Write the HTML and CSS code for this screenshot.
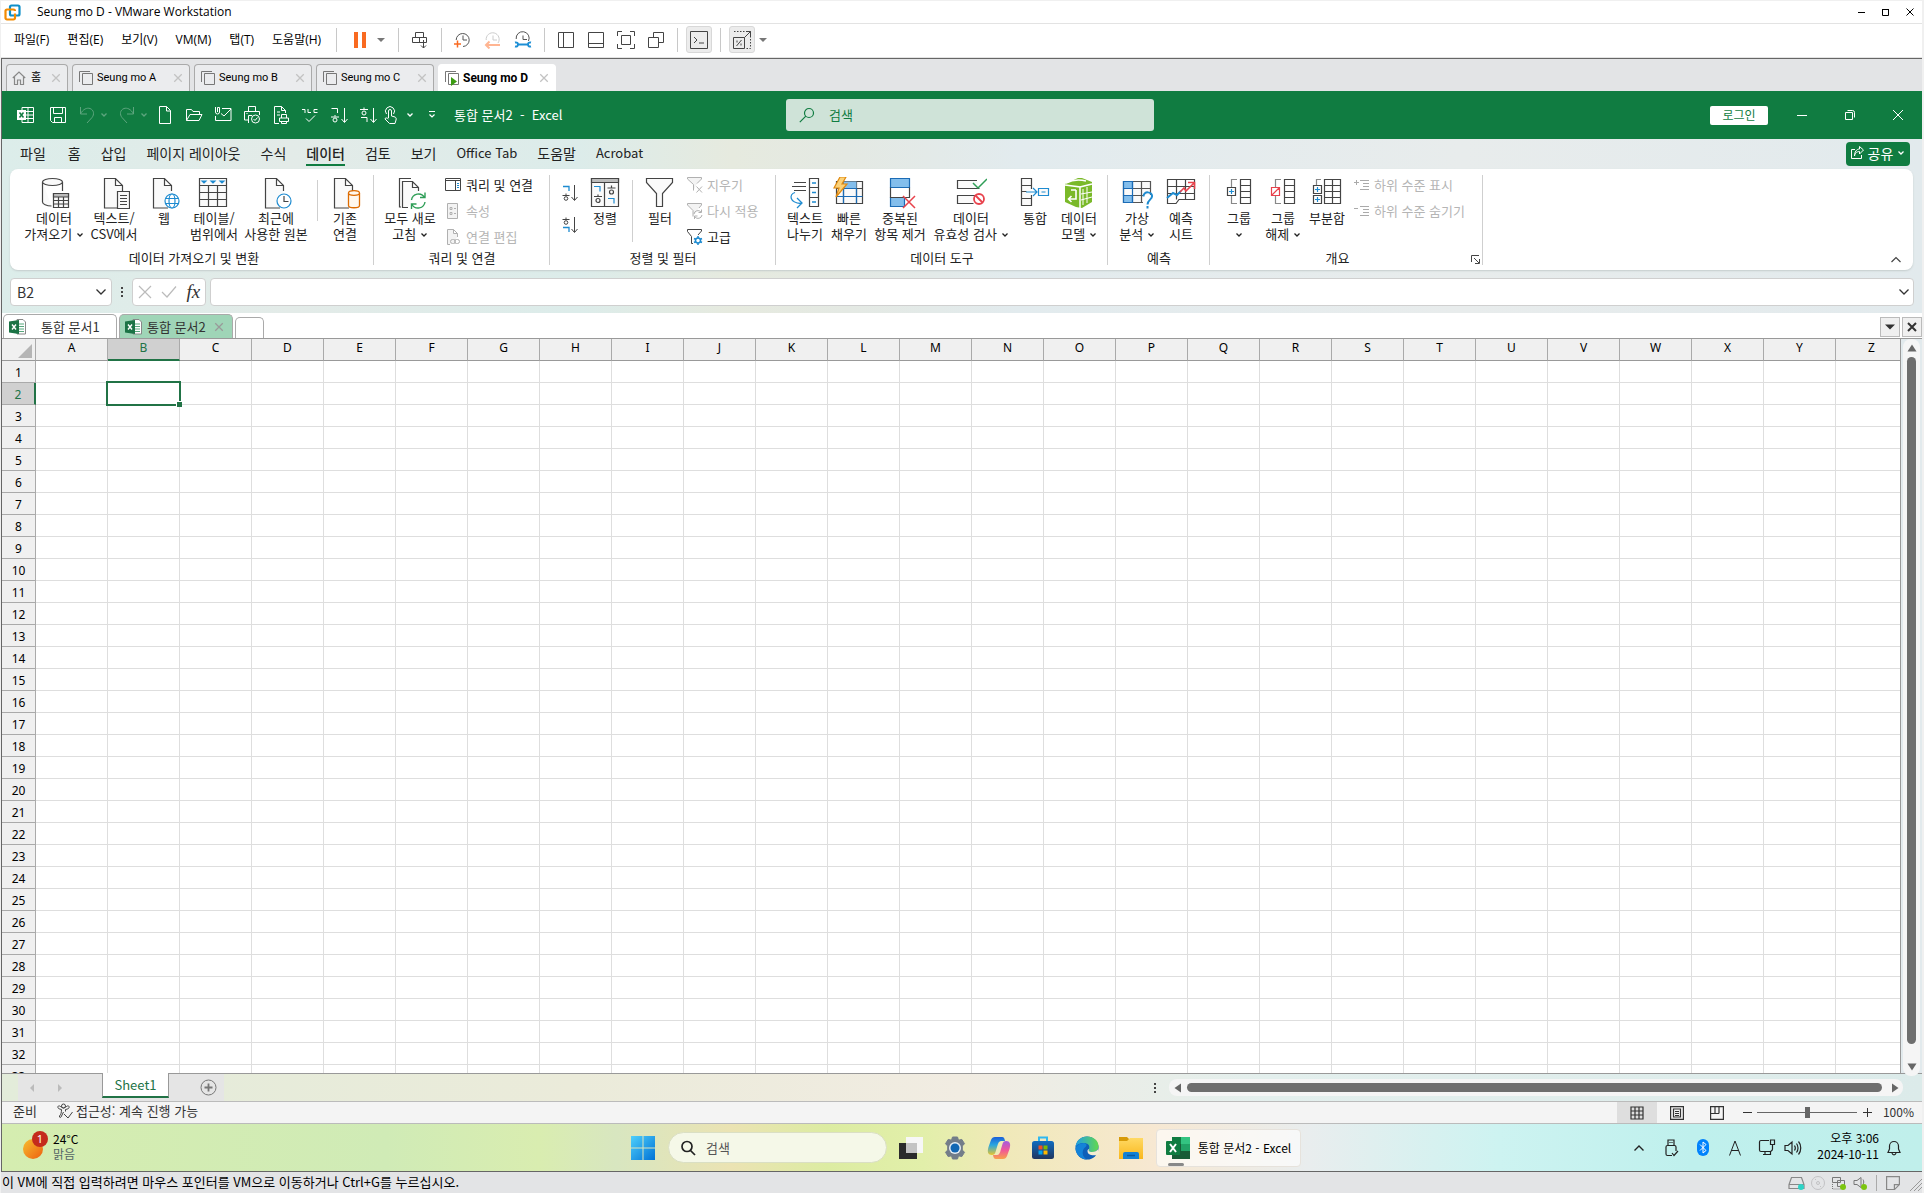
FILE: index.html
```html
<!DOCTYPE html>
<html lang="ko">
<head>
<meta charset="utf-8">
<title>Seung mo D - VMware Workstation</title>
<link rel="stylesheet" href="styles.css">
</head>
<body>
<svg width="0" height="0" class="defs" aria-hidden="true">
  <defs>
    <linearGradient id="gWin" x1="0" y1="0" x2="1" y2="1"><stop offset="0" stop-color="#4fd0fb"/><stop offset="1" stop-color="#0072d6"/></linearGradient>
    <linearGradient id="gSun" x1="0" y1="0" x2="1" y2="1"><stop offset="0" stop-color="#f6bf30"/><stop offset="1" stop-color="#ee5f10"/></linearGradient>
    <linearGradient id="gCop1" x1="0" y1="0" x2="0" y2="1"><stop offset="0" stop-color="#1b5fd9"/><stop offset=".45" stop-color="#2aa7e0"/><stop offset="1" stop-color="#e9c62d"/></linearGradient>
    <linearGradient id="gCop2" x1="0" y1="0" x2="0" y2="1"><stop offset="0" stop-color="#a25be0"/><stop offset=".5" stop-color="#f0569a"/><stop offset="1" stop-color="#f9a24a"/></linearGradient>
    <linearGradient id="gEdge" x1="0" y1="0" x2="1" y2="0"><stop offset="0" stop-color="#1f9fe6"/><stop offset="1" stop-color="#62d84e"/></linearGradient>
    <linearGradient id="gStore" x1="0" y1="0" x2="0" y2="1"><stop offset="0" stop-color="#0f6cc0"/><stop offset="1" stop-color="#20365f"/></linearGradient>
    <linearGradient id="gFold" x1="0" y1="0" x2="0" y2="1"><stop offset="0" stop-color="#ffd964"/><stop offset="1" stop-color="#f9b71c"/></linearGradient>
    <symbol id="chev" viewBox="0 0 8 8"><path d="M1.500 2.500 4 5l2.500-2.500" fill="none" stroke="currentColor" stroke-width="1.300"/></symbol>
    <symbol id="bigchev" viewBox="0 0 12 12"><path d="M1.500 3.500 6 8l4.500-4.500" fill="none" stroke="currentColor" stroke-width="1.300"/></symbol>
    <symbol id="tri" viewBox="0 0 8 8"><path d="M0 2h8L4 6z" fill="currentColor"/></symbol>
    <symbol id="vmtab" viewBox="0 0 16 16"><path d="M4.500 3.500h10v11h-10zM12 1.500H1.500V12" fill="none" stroke="#777"/></symbol>
    <symbol id="x" viewBox="0 0 12 12"><path d="M1.500 1.500l9 9M10.500 1.500l-9 9" fill="none" stroke="currentColor" stroke-width="1.500"/></symbol>
    <symbol id="page" viewBox="0 0 32 32"><path d="M20 31H5.500V1.500h11l7 7V14M16.500 1.500v7h7" fill="#fafafa" stroke="#444" stroke-width="1.200"/></symbol>
    <symbol id="xlsheet" viewBox="0 0 18 18"><path d="M8 1.500h6l2.500 2.500v12H8z" fill="#fff" stroke="#888"/><path d="M10 6h5M10 8.500h5M10 11h5M10 13.500h5" stroke="#57a77c"/><path d="M0 3.500 10 2v14L0 14.500z" fill="#1b7345"/><path d="M3 6.500l4 5M7 6.500l-4 5" stroke="#fff" stroke-width="1.400"/></symbol>
  </defs>
</svg>

<div class="vm">
  <header class="vm-title">
    <svg width="17" height="17" viewBox="0 0 17 17" fill="none" stroke-width="2.200"><rect x="6" y="1.500" width="9.500" height="10" rx="1.500" stroke="#0e8fc9"/><path d="M11 9.500V14a1.500 1.500 0 0 1-1.500 1.500H3A1.500 1.500 0 0 1 1.500 14V7A1.500 1.500 0 0 1 3 5.500h6.500A1.500 1.500 0 0 1 11 7" stroke="#f38b00"/></svg>
    <h1>Seung mo D - VMware Workstation</h1>
    <div class="vm-winbtns">
      <button aria-label="최소화"><svg width="8" height="8" viewBox="0 0 8 8"><path d="M0 4.500h7" stroke="#000"/></svg></button>
      <button aria-label="최대화"><svg width="8" height="8" viewBox="0 0 8 8"><path d="M.5 1.500h6v6h-6zM0 1.500h7" fill="none" stroke="#000"/></svg></button>
      <button aria-label="닫기"><svg width="8" height="8" viewBox="0 0 8 8"><path d="M.5.5l7 7M7.500.5l-7 7" stroke="#000"/></svg></button>
    </div>
  </header>

  <nav class="vm-menu">
    <button>파일(F)</button><button>편집(E)</button><button>보기(V)</button><button>VM(M)</button><button>탭(T)</button><button>도움말(H)</button>
    <div class="vm-tools">
      <i class="vsep"></i>
      <button aria-label="일시 중지" class="pause"><svg width="14" height="18" viewBox="0 0 14 18"><path d="M1 1h4v16H1zM9 1h4v16H9z" fill="#f96a21"/></svg></button>
      <svg class="dd" width="8" height="8"><use href="#tri"/></svg>
      <i class="vsep"></i>
      <button aria-label="보내기"><svg width="18" height="18" viewBox="0 0 18 18" fill="none" stroke="#444"><path d="M4.500 6.500v-5h8v5M1.500 6.500h14v5h-14zM8.500 6.500v5M12.500 9v8M10 14.500l2.500 2.500 2.500-2.500"/></svg></button>
      <i class="vsep"></i>
      <button aria-label="스냅숏 생성"><svg width="18" height="18" viewBox="0 0 18 18" fill="none" stroke="#555"><path d="M2.200 9A6.500 6.500 0 1 1 9 15.500M9 4.500V9h4"/><path d="M0 13h7M3.500 9.500v7" stroke="#f96a21" stroke-width="1.500"/></svg></button>
      <button aria-label="스냅숏 되돌리기"><svg width="18" height="18" viewBox="0 0 18 18" fill="none" stroke="#ccc"><path d="M2.200 9A6.500 6.500 0 1 1 14 12M9 4.500V9h4"/><path d="M2 14h14M5.500 10.500 2 14l3.500 3.500" stroke="#ffb592" stroke-width="2"/></svg></button>
      <button aria-label="스냅숏 관리"><svg width="18" height="18" viewBox="0 0 18 18" fill="none" stroke="#555"><path d="M2.200 8A6.500 6.500 0 1 1 14.500 10M9 4.500V8.500h4"/><path d="M4 13.500h11M1 11.500c4-1 4 5 0 4M17 11.500c-4-1-4 5 0 4" stroke="#1e8fd5" stroke-width="2"/></svg></button>
      <i class="vsep"></i>
      <button aria-label="라이브러리"><svg width="18" height="18" viewBox="0 0 18 18" fill="none" stroke="#444"><path d="M1.500 1.500h15v15h-15zM6.500 1.500v15"/></svg></button>
      <button aria-label="썸네일"><svg width="18" height="18" viewBox="0 0 18 18" fill="none" stroke="#444"><path d="M1.500 1.500h15v15h-15zM1.500 12.500h15"/></svg></button>
      <button aria-label="전체 화면"><svg width="18" height="18" viewBox="0 0 18 18" fill="none" stroke="#444"><path d="M4.500 4.500h9v9h-9zM.5 5V.5H5M13 .5h4.500V5M17.500 13v4.500H13M5 17.500H.5V13"/></svg></button>
      <button aria-label="유니티"><svg width="18" height="18" viewBox="0 0 18 18" fill="none" stroke="#444"><path d="M1.500 6.500h10v10h-10zM6.500 6V1.500h10v10H12"/></svg></button>
      <i class="vsep"></i>
      <button aria-label="콘솔" class="on"><svg width="18" height="18" viewBox="0 0 18 18" fill="none" stroke="#444"><path d="M.5.5h17v17H.5zM4 6l3 3-3 3M9 12h5"/></svg></button>
      <i class="vsep"></i>
      <button aria-label="확대" class="on"><svg width="18" height="18" viewBox="0 0 18 18" fill="none" stroke="#444"><path d="M1 .5h16.500V17.500H13" stroke-dasharray="1.500 1.500"/><path d="M.5 6.500h11v11H.5zM11.500 6.500l6-6M13 .5h4.500V5M8.500 9l-5 6M4 9.500v2M8 12.500v2"/></svg></button>
      <svg class="dd" width="8" height="8"><use href="#tri"/></svg>
    </div>
  </nav>

  <div class="vm-frame">
    <div class="vm-tabs">
      <div class="vtab home"><svg width="14" height="16" viewBox="0 0 14 16" fill="none" stroke="#888" stroke-width="1.200"><path d="M.8 8 7 2l6.200 6M2.500 7v7.500h3V10h3v4.500h3V7"/></svg><span>홈</span><button aria-label="닫기"><svg width="10" height="12"><use href="#x"/></svg></button></div>
      <div class="vtab"><svg width="16" height="16"><use href="#vmtab"/></svg><span>Seung mo A</span><button aria-label="닫기"><svg width="10" height="12"><use href="#x"/></svg></button></div>
      <div class="vtab"><svg width="16" height="16"><use href="#vmtab"/></svg><span>Seung mo B</span><button aria-label="닫기"><svg width="10" height="12"><use href="#x"/></svg></button></div>
      <div class="vtab"><svg width="16" height="16"><use href="#vmtab"/></svg><span>Seung mo C</span><button aria-label="닫기"><svg width="10" height="12"><use href="#x"/></svg></button></div>
      <div class="vtab active"><svg width="16" height="16" viewBox="0 0 16 16"><use href="#vmtab"/><path d="M7 7v9l6-4.500z" fill="#3c9c12"/></svg><span>Seung mo D</span><button aria-label="닫기"><svg width="10" height="12"><use href="#x"/></svg></button></div>
    </div>

    <div class="excel">
      <div class="xl-title">
        <div class="qat">
          <button aria-label="Excel"><svg width="18" height="18" viewBox="0 0 18 18" fill="none" stroke="#fff"><path d="M5 4V1.500h11.500v15H5V14M5 5.500h11.500M5 9h11.500M5 12.500h11.500M11 1.500v15"/><path d="M0 4h9v10H0z" fill="#fff" stroke="none"/><path d="M2.500 6.500l4 5M6.500 6.500l-4 5" stroke="#107c41" stroke-width="1.500"/></svg></button>
          <button aria-label="저장" class="save"><svg width="18" height="18" viewBox="0 0 18 18" fill="none" stroke="#fff"><path d="M1.500 1.500h15v15h-13l-2-2zM4.500 1.500v6h9v-6M5.500 16.500v-5h7v5"/></svg></button>
          <button aria-label="실행 취소" class="dim undo"><svg width="18" height="18" viewBox="0 0 18 18" fill="none" stroke="currentColor"><path d="M2.500 1v7H9M2.500 8C5 3 9 1.500 12 2.500c4 1.500 4.500 6 2 9L9 17"/></svg></button>
          <button aria-label="실행 취소 목록" class="dim list"><svg width="8" height="8"><use href="#chev"/></svg></button>
          <button aria-label="다시 실행" class="dim redo"><svg width="18" height="18" viewBox="0 0 18 18" fill="none" stroke="currentColor"><path d="M15.500 1v7H9M15.500 8C13 3 9 1.500 6 2.500c-4 1.500-4.500 6-2 9L9 17"/></svg></button>
          <button aria-label="다시 실행 목록" class="dim list"><svg width="8" height="8"><use href="#chev"/></svg></button>
          <button aria-label="새로 만들기" class="first"><svg width="18" height="18" viewBox="0 0 18 18" fill="none" stroke="#fff"><path d="M3.500.5h7l4 4v13h-11zM10.500.5v4.500h4"/></svg></button>
          <button aria-label="열기"><svg width="18" height="18" viewBox="0 0 18 18" fill="none" stroke="#fff"><path d="M1.500 14.500v-11h5l1.500 2h6.500v3M1.500 14.500l3.500-6h12l-3 6z"/></svg></button>
          <button aria-label="메일"><svg width="18" height="18" viewBox="0 0 18 18" fill="none" stroke="#fff"><path d="M8 2.500h9v12H1.500V10M17 3l-7 7-3-2.500M1.500 1v5a2 2 0 0 0 4 0V1.500h-2V6"/></svg></button>
          <button aria-label="빠른 인쇄"><svg width="18" height="18" viewBox="0 0 18 18" fill="none" stroke="#fff"><path d="M5.500 5V.5h7V5M5 14H1.500V5.500h15V9M5.500 17V9.500H9M3.500 7.500h1"/><circle cx="12.500" cy="13" r="4"/><path d="M10.500 13l1.500 1.500 2.500-3"/></svg></button>
          <button aria-label="인쇄 미리 보기"><svg width="18" height="18" viewBox="0 0 18 18" fill="none" stroke="#fff"><path d="M7 17.500H2.500V.5h7l4 4V7M9.500.5v4h4M5 6h3M5 9h3M9.500 12V8.500h5V12M7.500 12h9v3.500h-9zM9.500 15.500v2h5v-2"/></svg></button>
          <button aria-label="맞춤법 검사"><svg width="18" height="18" viewBox="0 0 18 18" fill="none" stroke="#fff"><path d="M1 3.500h3V7M7 3v3.500h3M16.500 3.500H13v3h3.500M5 12.500l3 3 6-6"/></svg></button>
          <button aria-label="오름차순 정렬"><svg width="18" height="18" viewBox="0 0 18 18" fill="none" stroke="#fff"><path d="M1.500 2.500h6V7M1 11h8M5 9v1.500M14.500 2v14M11.500 13l3 3.500 3-3.500"/><circle cx="5" cy="14" r="2"/></svg></button>
          <button aria-label="내림차순 정렬"><svg width="18" height="18" viewBox="0 0 18 18" fill="none" stroke="#fff"><path d="M1 3.500h8M5 1.500V3M2 11.500h6V16M14.500 2v14M11.500 13l3 3.500 3-3.500"/><circle cx="5" cy="7" r="2"/></svg></button>
          <button aria-label="터치/마우스 모드" class="touch"><svg width="16" height="18" viewBox="0 0 16 18" fill="none" stroke="#fff"><path d="M5.500 12V5a1.500 1.500 0 0 1 3 0v5l3.500 1c1 .5 1.500 1.500 1 3l-1 3.500H6.500L2 13c0-1.500 2-1.500 3.500 0"/><path d="M3.500 8a4.500 4.500 0 1 1 7 0"/></svg></button>
          <button aria-label="터치 목록" class="tlist"><svg width="8" height="8"><use href="#chev"/></svg></button>
          <button aria-label="빠른 실행 도구 모음 사용자 지정" class="more"><svg width="8" height="8" viewBox="0 0 8 8"><path d="M1 .5h6M1.500 3.500 4 6l2.500-2.500" fill="none" stroke="#fff" stroke-width="1.200"/></svg></button>
        </div>
        <div class="xl-name">통합 문서2&nbsp; -&nbsp; Excel</div>
        <label class="xl-search"><svg width="16" height="16" viewBox="0 0 16 16" fill="none" stroke="#107c41" stroke-width="1.200"><circle cx="10" cy="6" r="4.500"/><path d="M6.800 9.200.8 15.200"/></svg><input type="text" placeholder="검색" aria-label="검색"></label>
        <div class="xl-right">
          <button class="login">로그인</button>
          <button class="wb" aria-label="최소화"><svg width="12" height="12" viewBox="0 0 12 12"><path d="M1 6.500h10" stroke="#fff"/></svg></button>
          <button class="wb" aria-label="복원"><svg width="12" height="12" viewBox="0 0 12 12" fill="none" stroke="#fff"><path d="M1.500 3.500h7v7h-7zM3.500 1.500h5q2 0 2 2v5"/></svg></button>
          <button class="wb" aria-label="닫기"><svg width="12" height="12" viewBox="0 0 12 12"><path d="M1 1l10 10M11 1 1 11" stroke="#fff"/></svg></button>
        </div>
      </div>

      <nav class="xl-tabs">
        <button class="file">파일</button><button>홈</button><button>삽입</button><button>페이지 레이아웃</button><button>수식</button><button class="active">데이터</button><button>검토</button><button>보기</button><button class="en">Office Tab</button><button>도움말</button><button class="en">Acrobat</button>
        <button class="share"><svg width="13" height="14" viewBox="0 0 13 14" fill="none" stroke="#fff"><path d="M4 3.500H.500v9h10V9M3.500 10c.5-3.500 3-4.500 5-4.500V8l4-4-4-3.500V3C5.500 3 3.500 6 3.500 10z"/></svg>공유<svg width="8" height="8"><use href="#chev"/></svg></button>
      </nav>

      <div class="ribbon">
        <section class="g g1">
          <div class="items">
            <button class="big w60"><svg width="32" height="32" viewBox="0 0 32 32" fill="#fafafa" stroke="#444" stroke-width="1.200"><path d="M4.500 5v20c0 2 4 4 9 4M24.500 14V5"/><ellipse cx="14.500" cy="5" rx="10" ry="3.500"/><path d="M15.500 16.500h15v14h-15z"/><path d="M15.500 16.500h15v3.500h-15z" fill="#bbb"/><path d="M20.500 20v10.500M25.500 20v10.500M15.500 23.500h15M15.500 27h15"/></svg><span>데이터<br>가져오기 <svg width="8" height="8"><use href="#chev"/></svg></span></button>
            <button class="big w60"><svg width="32" height="32" viewBox="0 0 32 32" fill="#fafafa" stroke="#444"><use href="#page" x="1"/><path d="M19.500 14.500h12v17h-12z" stroke-width="1.200"/><path d="M22 18.500h7M22 21.500h7M22 24.500h7M22 27.500h7"/></svg><span>텍스트/<br>CSV에서</span></button>
            <button class="big w40"><svg width="32" height="32" viewBox="0 0 32 32" fill="#fff" stroke="#1e8bd0" stroke-width="1.200"><use href="#page"/><circle cx="24" cy="24" r="7"/><ellipse cx="24" cy="24" rx="3" ry="7"/><path d="M17.500 21.500h13M17.500 26.500h13"/></svg><span>웹</span></button>
            <button class="big w60"><svg width="32" height="32" viewBox="0 0 32 32" fill="#fafafa" stroke="#444" stroke-width="1.200"><path d="M1.500 1.500h27v28h-27z"/><path d="M1.500 8.500h27M1.500 15.500h27M1.500 22.500h27M10.500 8.500v21M19.500 8.500v21"/><path d="M4 4h4l-2 2zM13 4h4l-2 2zM22 4h4l-2 2z" fill="#1e8bd0" stroke="#1e8bd0"/></svg><span>테이블/<br>범위에서</span></button>
            <button class="big w64"><svg width="32" height="32" viewBox="0 0 32 32" fill="#fff" stroke="#1e8bd0" stroke-width="1.200"><use href="#page"/><circle cx="24" cy="24" r="7"/><path d="M24 19v5.500h4.500" stroke="#444" fill="none"/></svg><span>최근에<br>사용한 원본</span></button>
            <i class="isep"></i>
            <button class="big w40"><svg width="32" height="32" viewBox="0 0 32 32" fill="#fff8ee" stroke="#dd6b00" stroke-width="1.300"><use href="#page"/><path d="M19.500 16v12.500c0 3 11 3 11 0V16"/><ellipse cx="25" cy="16" rx="5.500" ry="2.300"/></svg><span>기존<br>연결</span></button>
          </div>
          <h2>데이터 가져오기 및 변환</h2>
        </section>
        <section class="g g2">
          <div class="items">
            <button class="big w64"><svg width="32" height="32" viewBox="0 0 32 32" fill="none" stroke="#444" stroke-width="1.200"><path d="M7 30H5.500V1.500H17"/><path d="M14 30.500H8.500V4.500h10l6 6V14M18.500 4.500v6h6" fill="#fafafa"/><g stroke="#2f9e57" stroke-width="1.400"><path d="M17.500 23a7 7 0 0 1 13-2.500M31 15.500v5h-5M31 25a7 7 0 0 1-13 2.500M17.500 32v-5h5"/></g></svg><span>모두 새로<br>고침 <svg width="8" height="8"><use href="#chev"/></svg></span></button>
            <div class="smalls">
              <button><svg width="16" height="16" viewBox="0 0 16 16" fill="none" stroke="#444"><path d="M.5 1.500h15v12H.5zM.5 3.500h15M10.500 4v9"/><path d="M12 6.500h2M12 8.500h2M12 10.500h2" stroke="#1e8bd0"/></svg>쿼리 및 연결</button>
              <button disabled><svg width="16" height="16" viewBox="0 0 16 16" fill="#f3f3f3" stroke="#b0b0b0"><path d="M2.500.5h10v15h-10z"/><path d="M5 4.500h2v2H5zM5 9.500h2v2H5zM9 5.500h2M9 10.500h2"/></svg>속성</button>
              <button disabled><svg width="16" height="16" viewBox="0 0 16 16" fill="#f3f3f3" stroke="#b0b0b0"><path d="M5 15.500H2.500V.5h6l4 4V8M8.500.5v4h4"/><rect x="5.500" y="10.500" width="5" height="4" rx="2"/><rect x="9.500" y="10.500" width="5" height="4" rx="2" fill="none"/></svg>연결 편집</button>
            </div>
          </div>
          <h2>쿼리 및 연결</h2>
        </section>
        <section class="g g3">
          <div class="items">
            <div class="sorts">
              <button aria-label="오름차순"><svg width="18" height="18" viewBox="0 0 18 18" fill="none" stroke="#444"><path d="M2 2.500h6V7" stroke="#1e8bd0" stroke-width="1.300"/><path d="M1.500 11.500h7M5 9.500V11M13.500 1v15M10.500 13l3 3.500 3-3.500"/><circle cx="5" cy="14.500" r="1.800"/></svg></button>
              <button aria-label="내림차순"><svg width="18" height="18" viewBox="0 0 18 18" fill="none" stroke="#444"><path d="M2 11.500h6V16" stroke="#1e8bd0" stroke-width="1.300"/><path d="M1.500 3.500h7M5 1.500V3M13.500 1v15M10.500 13l3 3.500 3-3.500"/><circle cx="5" cy="6.500" r="1.800"/></svg></button>
            </div>
            <button class="big w42"><svg width="32" height="32" viewBox="0 0 32 32" fill="#fafafa" stroke="#444" stroke-width="1.200"><path d="M2.500 1.500h27v28h-27zM15.500 5v24.500"/><path d="M2.500 1.500h27v4h-27z" fill="#bbb"/><path d="M5 9.500h6v5M19 21.500h6v5" fill="none" stroke="#1e8bd0"/><path d="M5 19.500h8M9 17.500v2M18.500 11h8M22.500 8.500V11"/><circle cx="9" cy="23.500" r="2"/><circle cx="22.500" cy="15" r="2"/></svg><span>정렬</span></button>
            <i class="isep tall"></i>
            <button class="big w44"><svg width="32" height="32" viewBox="0 0 32 32" fill="#fafafa" stroke="#444" stroke-width="1.200"><path d="M2.500 1.500h26v4l-10 11v13h-6v-13l-10-11z"/></svg><span>필터</span></button>
            <div class="smalls f">
              <button disabled><svg width="16" height="16" viewBox="0 0 16 16" fill="#f3f3f3" stroke="#b0b0b0"><path d="M6.500 13.500v-6l-6-5.500V.5h14V2L10 6.500M9.500 9.500l5.500 6M15 9.500l-5.500 6"/></svg>지우기</button>
              <button disabled><svg width="16" height="16" viewBox="0 0 16 16" fill="#f3f3f3" stroke="#b0b0b0"><path d="M6 13.500v-6L.5 2V.5h14V2L12 5"/><path d="M7 11a4 4 0 0 1 7-2M14.500 6.500v3h-3M15 12a4 4 0 0 1-7 2M7.500 16v-3h3" fill="none"/></svg>다시 적용</button>
              <button><svg width="16" height="16" viewBox="0 0 16 16" fill="none" stroke="#444"><path d="M6 14.500H4.500v-7l-4-5V.5h14V2L11 6"/><circle cx="11" cy="11.500" r="2.500" stroke="#1e8bd0" stroke-width="1.500"/><path d="M11 7v2M11 14v2M7 9.500l2 1M13 12.500l2 1M15 9.500l-2 1M9 12.500l-2 1" stroke="#1e8bd0" stroke-width="1.500"/></svg>고급</button>
            </div>
          </div>
          <h2>정렬 및 필터</h2>
        </section>
        <section class="g g4">
          <div class="items">
            <button class="big w44"><svg width="32" height="32" viewBox="0 0 32 32" fill="none" stroke="#444" stroke-width="1.200"><path d="M5 5.500h12M3 9.500h14M5 13.500h12M20.500 1.500h9v28h-9zM20.500 10.500h9M20.500 20.500h9"/><path d="M23 6h4M23 15.500h4M23 25h4M6 15.500c-6 2-6 10 6 11M8 21l5 5-5 5" stroke="#1e8bd0" stroke-width="1.300"/></svg><span>텍스트<br>나누기</span></button>
            <button class="big w44"><svg width="32" height="32" viewBox="0 0 32 32" fill="#fafafa" stroke="#444" stroke-width="1.200"><path d="M3.500 4.500h26v22h-26z"/><path d="M3.500 11.500h26M3.500 19.500h26M10.500 4.500v22M23.500 4.500v22"/><path d="M10.500 4.500h13v7h-13z" fill="#83beec" stroke="none"/><path d="M10.500 11.500h13v15M10.500 11.500v15M3.500 19.500h26" fill="none" stroke="#1b6bb5"/><path d="M7 0h6L9 7h5L3 20l3-9H1z" fill="#fbd27a" stroke="#e08a10"/></svg><span>빠른<br>채우기</span></button>
            <button class="big w58"><svg width="32" height="32" viewBox="0 0 32 32" fill="none" stroke="#1b6bb5" stroke-width="1.200"><path d="M6.500 1.500h19v9h-19zM6.500 20.500h14v9h-14z" fill="#83beec"/><path d="M6.500 10.500v10h19v-10" stroke="#444"/><path d="M19 19l12 12M31 19 19 31" stroke="#e8424c" stroke-width="1.500"/></svg><span>중복된<br>항목 제거</span></button>
            <button class="big w84"><svg width="32" height="32" viewBox="0 0 32 32" fill="none" stroke="#444" stroke-width="1.200"><path d="M22 3.500H2.500v8h22M20 18.500H2.500v8h16" fill="#fafafa"/><path d="M18 6l5 5 9-9" stroke="#2f9e57" stroke-width="1.500"/><circle cx="24" cy="22" r="5" stroke="#e8424c" stroke-width="1.800"/><path d="M20.500 18.500l7 7" stroke="#e8424c" stroke-width="1.800"/></svg><span>데이터<br>유효성 검사 <svg width="8" height="8"><use href="#chev"/></svg></span></button>
            <button class="big w44"><svg width="32" height="32" viewBox="0 0 32 32" fill="#fafafa" stroke="#444" stroke-width="1.200"><path d="M12.500 12V1.500h-10v27h10V18M2.500 8.500h10M2.500 14.500h5M2.500 21.500h10"/><path d="M7 15h11M14 11l4 4-4 4" fill="none" stroke="#1e8bd0"/><path d="M19.500 11.500h10v7h-10zM22.500 15h4" stroke="#1e8bd0"/></svg><span>통합</span></button>
            <button class="big w44"><svg width="32" height="32" viewBox="0 0 32 32"><path d="M2 7 15 1h4l10 4v20l-10 6-6-1-11-5z" fill="#7ab929"/><path d="M2 8l15 2v21M17 10l12-3M3 6c8-4 16-3 20-2" fill="none" stroke="#fff" stroke-width="1.500"/><path d="M20 12v16M24 10v16M18 17l11-2M18 23l11-3" stroke="#fff"/><path d="M13 13v9H6M8 13h5M8.500 19l-3 3 3 3" fill="none" stroke="#fff" stroke-width="1.600"/></svg><span>데이터<br>모델 <svg width="8" height="8"><use href="#chev"/></svg></span></button>
          </div>
          <h2>데이터 도구</h2>
        </section>
        <section class="g g5">
          <div class="items">
            <button class="big w44"><svg width="32" height="32" viewBox="0 0 32 32" fill="#fafafa" stroke="#555" stroke-width="1.200"><path d="M2.500 4.500h27v21h-27zM20.500 4.500v21M2.500 11.500h27M2.500 18.500h27"/><path d="M2.500 4.500h9v7h-9zM2.500 18.500h9v7h-9z" fill="#83beec" stroke="#1b6bb5"/><path d="M11.500 4.500v21M2.500 11.500v7" stroke="#1b6bb5"/><path d="M22 18h10v14H22z" fill="#fff" stroke="none"/><path d="M22.500 19.500c0-6 9-5 8.500 0 0 3-4.500 3.500-4.500 8M26.500 29v2.500" fill="none" stroke="#1e8bd0" stroke-width="2"/></svg><span>가상<br>분석 <svg width="8" height="8"><use href="#chev"/></svg></span></button>
            <button class="big w44"><svg width="32" height="32" viewBox="0 0 32 32" fill="none" stroke="#444" stroke-width="1.200"><path d="M2.500 2.500h27v20H14l-3 4H2.500zM11.500 2.500v20M20.500 2.500v20M2.500 9.500h27M2.500 16.500h27"/><path d="M2 21l6-5 4 2 4-4" stroke="#1e8bd0" stroke-width="2"/><path d="M15 15l4-4 2 3 8-8M23 5.500h6.500V12" stroke="#e8424c" stroke-width="1.600"/></svg><span>예측<br>시트</span></button>
          </div>
          <h2>예측</h2>
        </section>
        <section class="g g6">
          <div class="items">
            <button class="big w44"><svg width="32" height="32" viewBox="0 0 32 32" fill="#fff" stroke="#444" stroke-width="1.200"><path d="M17.500 2.500h10v24h-10zM17.500 8.500h10M17.500 14.500h10M17.500 20.500h10"/><path d="M14 2.500H8.500v24H14" stroke="#888"/><path d="M4.500 10.500h8v8h-8z"/><path d="M6 14.500h5M8.500 12v5" stroke="#1e8bd0"/></svg><span>그룹<br><svg width="8" height="8"><use href="#chev"/></svg></span></button>
            <button class="big w44"><svg width="32" height="32" viewBox="0 0 32 32" fill="#fff" stroke="#444" stroke-width="1.200"><path d="M17.500 2.500h10v24h-10zM17.500 8.500h10M17.500 14.500h10M17.500 20.500h10"/><path d="M14 2.500H8.500v24H14" stroke="#888"/><path d="M4.500 10.500h8v8h-8zM5 18l7-7" stroke="#e8424c"/></svg><span>그룹<br>해제 <svg width="8" height="8"><use href="#chev"/></svg></span></button>
            <button class="big w44"><svg width="32" height="32" viewBox="0 0 32 32" fill="#fff" stroke="#444" stroke-width="1.200"><path d="M13.500 2.500h16v24h-16zM13.500 8.500h16M13.500 14.500h16M13.500 20.500h16M21.500 2.500v24"/><path d="M10 2.500H5.500V8" stroke="#888"/><path d="M2.500 8.500h8v8h-8zM2.500 18.500h8v8h-8z"/><path d="M4 12.500h5M6.500 10v5M4 22.500h5M6.500 20v5" stroke="#1e8bd0"/></svg><span>부분합</span></button>
            <div class="smalls o">
              <button disabled><svg width="16" height="16" viewBox="0 0 16 16" fill="none" stroke="#aaa"><path d="M0 5.500h5M2.500 3v5M6 3.500h9M9 6.500h6M9 9.500h6M6 12.500h9"/></svg>하위 수준 표시</button>
              <button disabled><svg width="16" height="16" viewBox="0 0 16 16" fill="none" stroke="#aaa"><path d="M0 5.500h4M6 3.500h9M9 6.500h6M9 9.500h6M6 12.500h9"/></svg>하위 수준 숨기기</button>
            </div>
          </div>
          <h2>개요</h2>
          <button class="launcher" aria-label="개요 설정"><svg width="9" height="9" viewBox="0 0 9 9" fill="none" stroke="#444"><path d="M.5 7V.5H8M3 3l5 5M8.500 4v4.500H4"/></svg></button>
        </section>
        <button class="collapse" aria-label="리본 축소"><svg width="12" height="12" viewBox="0 0 12 12" fill="none" stroke="#444" stroke-width="1.200"><path d="M1.500 8 6 3.500 10.500 8"/></svg></button>
      </div>

      <div class="fbar">
        <div class="namebox"><input type="text" value="B2" aria-label="이름 상자"><svg width="12" height="12"><use href="#bigchev"/></svg></div>
        <svg class="dots" width="4" height="14" viewBox="0 0 4 14"><path d="M1 2h2v2H1zM1 6h2v2H1zM1 10h2v2H1z" fill="#444"/></svg>
        <div class="fx">
          <button aria-label="취소"><svg width="14" height="14" viewBox="0 0 14 14"><path d="M1 1l12 12M13 1 1 13" stroke="#bbb" stroke-width="1.200"/></svg></button>
          <button aria-label="입력"><svg width="16" height="14" viewBox="0 0 16 14"><path d="M1 7l5 5L15 1.500" fill="none" stroke="#bbb" stroke-width="1.200"/></svg></button>
          <button aria-label="함수 삽입" class="fn">fx</button>
        </div>
        <div class="formula"><input type="text" aria-label="수식 입력줄"><svg width="12" height="12"><use href="#bigchev"/></svg></div>
      </div>

      <div class="docs">
        <button class="doc"><svg width="18" height="18"><use href="#xlsheet"/></svg><span>통합 문서1</span></button>
        <button class="doc active"><svg width="18" height="18"><use href="#xlsheet"/></svg><span>통합 문서2</span><svg class="dx" width="10" height="10"><use href="#x"/></svg></button>
        <button class="doc new" aria-label="새 문서"></button>
        <div class="docbtns">
          <button aria-label="문서 목록"><svg width="10" height="10"><use href="#tri"/></svg></button>
          <button aria-label="닫기"><svg width="12" height="12" viewBox="0 0 12 12"><path d="M2 2l8 8M10 2l-8 8" stroke="#333" stroke-width="2"/></svg></button>
        </div>
      </div>

      <div class="sheet">
        <div class="grid"><table id="cells"></table></div>
        <div class="vscroll"><svg width="10" height="10" viewBox="0 0 10 10"><path d="M5 1.500 9.500 8.500h-9z" fill="#666"/></svg><i></i><svg width="10" height="10" viewBox="0 0 10 10"><path d="M5 8.500.5 1.500h9z" fill="#666"/></svg></div>
      </div>

      <div class="sheets">
        <div class="strip">
          <button aria-label="이전 시트"><svg width="6" height="8" viewBox="0 0 6 8"><path d="M5 0v8L1 4z" fill="#bbb"/></svg></button>
          <button aria-label="다음 시트"><svg width="6" height="8" viewBox="0 0 6 8"><path d="M1 0v8l4-4z" fill="#bbb"/></svg></button>
          <button class="stab">Sheet1</button>
          <button class="add" aria-label="새 시트"><svg width="17" height="17" viewBox="0 0 17 17" fill="none" stroke="#777"><circle cx="8.500" cy="8.500" r="7.500"/><path d="M8.500 4.500v8M4.500 8.500h8" stroke-width="1.800"/></svg></button>
        </div>
        <svg class="dots" width="4" height="14" viewBox="0 0 4 14"><path d="M1 2h2v2H1zM1 6h2v2H1zM1 10h2v2H1z" fill="#444"/></svg>
        <div class="hscroll"><svg width="10" height="10" viewBox="0 0 10 10"><path d="M1.500 5 8 .5v9z" fill="#666"/></svg><i></i><svg width="10" height="10" viewBox="0 0 10 10"><path d="M8.500 5 2 .5v9z" fill="#666"/></svg></div>
      </div>

      <footer class="status">
        <span>준비</span>
        <span class="acc"><svg width="16" height="16" viewBox="0 0 16 16" fill="none" stroke="#444"><circle cx="6.500" cy="3" r="2"/><path d="M1 3.500c-.5 2 1 2.500 3.500 3 0 3-.5 5-2 6.500-.5 1.500 1 2 1.500 1L6.500 9M12 3.500c.5 2-1 2.500-3.500 3v2M1 3.500c1-2 3 1 5.500 1.500C9 4.500 11 1.500 12 3.500M7 11l4 4 4.500-6"/></svg>접근성: 계속 진행 가능</span>
        <div class="views">
          <button class="on" aria-label="기본"><svg width="14" height="14" viewBox="0 0 14 14" fill="none" stroke="#333" stroke-width="1.200"><path d="M1 1h12v12H1zM5 1v12M9 1v12M1 5h12M1 9h12"/></svg></button>
          <button aria-label="페이지 레이아웃"><svg width="14" height="14" viewBox="0 0 14 14" fill="none" stroke="#333" stroke-width="1.200"><path d="M.6.600h12.800v12.800H.6zM3.500 3h7v8h-7zM5 5.500h4M5 7.500h4M5 9.500h4"/></svg></button>
          <button aria-label="페이지 나누기"><svg width="14" height="14" viewBox="0 0 14 14" fill="none" stroke="#333" stroke-width="1.200"><path d="M.6.600h12.800v12.800H.6zM5 .600v7M9 .600v7M.6 7.500H9"/></svg></button>
          <button class="z" aria-label="축소"><svg width="9" height="9" viewBox="0 0 9 9"><path d="M0 4.500h9" stroke="#333"/></svg></button>
          <input type="range" min="0" max="100" value="50" aria-label="확대/축소">
          <button class="z" aria-label="확대"><svg width="9" height="9" viewBox="0 0 9 9"><path d="M0 4.500h9M4.500 0v9" stroke="#333"/></svg></button>
          <span class="pct">100%</span>
        </div>
      </footer>

      <div class="taskbar">
        <button class="weather">
          <svg width="28" height="30" viewBox="0 0 28 30"><circle cx="12" cy="18" r="10" fill="url(#gSun)"/><circle cx="19" cy="8" r="8" fill="#c42b1c"/><text x="19" y="12" text-anchor="middle" font-size="11" fill="#fff">1</text></svg>
          <span>24°C<br><em>맑음</em></span>
        </button>
        <div class="apps">
          <button aria-label="시작" class="start"><svg width="24" height="24" viewBox="0 0 24 24"><path d="M0 0h11.500v11.500H0zM12.500 0H24v11.500H12.500zM0 12.500h11.500V24H0zM12.500 12.500H24V24H12.500z" fill="url(#gWin)"/></svg></button>
          <label class="tsearch"><svg width="16" height="16" viewBox="0 0 16 16" fill="none" stroke="#222" stroke-width="1.700"><circle cx="7" cy="6.500" r="5"/><path d="M10.500 10.500 15 15"/></svg><input type="text" placeholder="검색" aria-label="작업 표시줄 검색"></label>
          <button aria-label="작업 보기"><svg width="26" height="24" viewBox="0 0 26 24"><path d="M8 1h17v16H8z" fill="#f7f7f7"/><path d="M1 7h18v16H1z" fill="#2b2b2b"/><path d="M8 7h11v10H8z" fill="#c4c4c4"/></svg></button>
          <button aria-label="설정"><svg width="24" height="24" viewBox="0 0 24 24"><path d="M9.500 1h5l1 3.200 3.300-.8 2.700 4.300L19.300 10v4l2.200 2.300-2.700 4.300-3.300-.8-1 3.200h-5l-1-3.200-3.300.8-2.700-4.300L4.700 14v-4L2.500 7.700l2.700-4.300 3.300.8z" fill="#737d89" stroke="#737d89"/><circle cx="12" cy="12" r="6" fill="#e6eef5"/><circle cx="12" cy="12" r="4.500" fill="#1267b4"/></svg></button>
          <button aria-label="Copilot"><svg width="24" height="24" viewBox="0 0 24 24"><path d="M8 1h7c2 0 2.500 1.500 3 4h-4c-2 0-3 2-4 6l-1.500 5C8 18 7 19 5 19 1 19 0 16 1.500 11L4 4c.8-2 2-3 4-3z" fill="url(#gCop1)"/><path d="M16 23H9c-2 0-2.500-1.500-3-4h4c2 0 3-2 4-6l1.500-5c.5-2 1.500-3 3.500-3 4 0 5 3 3.500 8L20 20c-.8 2-2 3-4 3z" fill="url(#gCop2)"/></svg></button>
          <button aria-label="Store"><svg width="24" height="24" viewBox="0 0 24 24"><path d="M8 6V1.500h8V6" fill="none" stroke="#2fb8f0" stroke-width="2"/><rect x="1" y="5" width="22" height="18" rx="2.500" fill="url(#gStore)"/><path d="M7.500 9.500h4v4h-4z" fill="#f25022"/><path d="M12.500 9.500h4v4h-4z" fill="#7fba00"/><path d="M7.500 14.500h4v4h-4z" fill="#00a4ef"/><path d="M12.500 14.500h4v4h-4z" fill="#ffb900"/></svg></button>
          <button aria-label="Edge"><svg width="24" height="24" viewBox="0 0 24 24"><circle cx="12" cy="12" r="11.500" fill="#0f5fb8"/><path d="M.5 11C1.500 4 6 .5 12 .5 19 .5 23.500 5 23.500 10c0 4-3 6-6.500 6-2.500 0-4-1-3-3 1.500-4-2-6-5-6C4.500 7 1.500 9 .5 11z" fill="url(#gEdge)"/><path d="M9 7C4.500 7 .5 10 .5 13c.5 6 6 10.500 12 10.500C7 22 6 14 10.500 11c1.500-1 1.500-3.500-1.500-4z" fill="#1483d8"/><path d="M14 13c-1 2 .5 3 3 3 2.500 0 5-1 6.200-3l.8 5-2.500 1c-4 1-9 0-9-4 0-1 .5-2 1.500-2z" fill="#f4edd2"/></svg></button>
          <button aria-label="탐색기"><svg width="26" height="24" viewBox="0 0 26 24"><path d="M1 1h8l3 3v4H1z" fill="#d79a08"/><path d="M1 5h8l3-3h13v21H1z" fill="url(#gFold)"/><path d="M5 23v-5q0-2 2-2h12q2 0 2 2v5z" fill="#1380d4"/><path d="M9 19.500h8" stroke="#0b5aa0" stroke-width="1.500"/></svg></button>
          <button class="xlapp"><svg width="24" height="24" viewBox="0 0 24 24"><path d="M6 1h18v22H6z" fill="#21a366"/><path d="M6 1h9v7H6z" fill="#107c41"/><path d="M15 1h9v7h-9z" fill="#33c481"/><path d="M6 8h9v8H6z" fill="#185c37"/><path d="M15 15h9v8H6v-8z" fill="#185c37"/><rect y="5" width="14" height="14" rx="1" fill="#107c41"/><path d="M4 8l6 8M10 8l-6 8" stroke="#fff" stroke-width="2"/></svg><span>통합 문서2 - Excel</span></button>
        </div>
        <div class="tray">
          <button aria-label="숨겨진 아이콘"><svg width="12" height="12" viewBox="0 0 12 12" fill="none" stroke="#222" stroke-width="1.400"><path d="M1.500 8.500 6 4l4.500 4.500"/></svg></button>
          <button aria-label="USB"><svg width="16" height="18" viewBox="0 0 16 18" fill="none" stroke="#222" stroke-width="1.200"><path d="M5 6V1h6v5M9 16.500H4.500c-1 0-1.500-.5-1.500-1.500V8c0-1 .5-1.500 1.500-1.500h7c1 0 1.500.5 1.500 1.500v4M7 3v1M9 3v1M9 14l2 2.500L15 12"/></svg></button>
          <button aria-label="Bluetooth"><svg width="12" height="17" viewBox="0 0 12 17"><rect width="12" height="17" rx="6" fill="#0082fc"/><path d="M3 5.500l6 6L6 14V3l3 2.500-6 6" fill="none" stroke="#fff"/></svg></button>
          <button aria-label="입력 모드"><svg width="14" height="16" viewBox="0 0 14 16" fill="none" stroke="#222"><path d="M1.500 15.500 7 1l5.500 14.500M3.300 10.500h7.400"/></svg></button>
          <button aria-label="네트워크"><svg width="18" height="17" viewBox="0 0 18 17" fill="none" stroke="#222" stroke-width="1.200"><path d="M11 1.500H3C2 1.500 1.500 2 1.500 3v8c0 1 .5 1.500 1.500 1.500h9.500V16M5 15.500h8M7 12.500v3M12.500 1h4v4.500h-4zM14.500 5.500V10c0 2-2 2-2 3"/></svg></button>
          <button aria-label="볼륨" class="vol"><svg width="18" height="16" viewBox="0 0 18 16" fill="none" stroke="#222" stroke-width="1.200"><path d="M1 5.500h3L8 2v12l-4-3.500H1zM10.500 5.500c1 1.500 1 3.500 0 5M12.500 3.500c2 2.500 2 6.500 0 9M14.500 1.500c3 3.500 3 9.500 0 13"/></svg></button>
          <span class="clock">오후 3:06<br>2024-10-11</span>
          <button aria-label="알림" class="bell"><svg width="14" height="16" viewBox="0 0 14 16" fill="none" stroke="#222" stroke-width="1.200"><path d="M1 12.500 2.500 9V6a4.500 4.500 0 0 1 9 0v3l1.500 3.500zM5 13c.5 2.500 3.500 2.500 4 0"/></svg></button>
        </div>
      </div>
    </div>
  </div>

  <footer class="vm-status">
    <span>이 VM에 직접 입력하려면 마우스 포인터를 VM으로 이동하거나 Ctrl+G를 누르십시오.</span>
    <div class="vm-icons">
      <svg width="17" height="14" viewBox="0 0 17 14" fill="none" stroke="#888" stroke-width="1.200"><path d="M3.500 1.500h10l2.500 7v4H1v-4zM1 8.500h15"/><circle cx="13" cy="11" r="3" fill="#2ed3c6" stroke="none"/></svg>
      <svg width="14" height="14" viewBox="0 0 14 14" fill="none" stroke="#c2c2c4"><circle cx="7" cy="7" r="6.500"/><circle cx="7" cy="7" r="1.500"/><path d="M4 3l1 1M10 11l-1-1"/></svg>
      <svg width="16" height="14" viewBox="0 0 16 14" fill="none" stroke="#777"><path d="M1.500 1.500h8v5h-8zM6.500 4.500h7v6h-7z"/><path d="M1.500 8v5h9" stroke-dasharray="1 1"/><circle cx="12" cy="11" r="3" fill="#7cc510" stroke="none"/></svg>
      <svg width="14" height="14" viewBox="0 0 14 14" fill="none" stroke="#777"><path d="M1 4.500h3l4-3v10l-4-3H1zM10 3.500c1 2 1 3 0 5"/><circle cx="11" cy="11" r="3" fill="#7cc510" stroke="none"/></svg>
      <i></i>
      <svg width="14" height="14" viewBox="0 0 14 14" fill="none" stroke="#888" stroke-width="1.200"><path d="M.6.600h12.800v8l-5 5H.6zM13 8.600H8.400v5"/></svg>
      <svg class="grip" width="12" height="12" viewBox="0 0 12 12" stroke="#999"><path d="M0 12 12 0M4 12l8-8M8 12l4-4"/></svg>
    </div>
  </footer>
</div>
<script src="grid.js"></script>
</body>
</html>
```
FILE: styles.css
```css
* { box-sizing: border-box; }
body { margin: 0; background: #f0f0f0; font: 12px/16px "Noto Sans CJK KR", "Noto Sans", sans-serif; color: #000; }
button, input { font: inherit; color: inherit; border: 0; background: none; padding: 0; margin: 0; }
button { display: flex; align-items: center; justify-content: center; white-space: nowrap; }
input { min-width: 0; outline: 0; }
svg { flex: none; display: block; }
h1, h2 { margin: 0; font: inherit; }
.defs { position: absolute; }

.vm { display: flex; flex-direction: column; height: 100vh; padding: 1px 2px 0 1px; overflow: hidden; }
.vm-title { display: flex; align-items: center; height: 22px; padding-left: 3px; background: #fff; }
.vm-title h1 { margin-left: 16px; font-family: "Open Sans", sans-serif; }
.vm-winbtns { display: flex; margin-left: auto; }
.vm-winbtns button { width: 24px; height: 22px; }

.vm-menu { display: flex; align-items: center; height: 35px; padding: 0 0 2px 4px; background: #fff; border-top: 1px solid #e3e3e3; border-bottom: 1px solid #e3e3e3; font-family: "Open Sans", "Noto Sans CJK KR", sans-serif; }
.vm-menu > button { padding: 0 9px; height: 24px; }
.vm-tools { display: flex; align-items: center; }
.vm-tools button { width: 26px; height: 27px; margin: 0 2px; }
.vm-tools .pause { width: 22px; margin: 0 0 0 6px; }
.vm-tools .on { background: #ececec; border: 1px solid #d8d8d8; border-radius: 3px; }
.vm-tools .dd { margin: 0 7px 0 6px; color: #777; }
.vm-tools .on + .dd { margin-left: 2px; }
.vsep { width: 1px; height: 24px; margin: 0 6px; background: #c8c8c8; }

.vm-frame { flex: 1; min-height: 0; display: flex; flex-direction: column; border: 1px solid #666; border-right: 0; background: #e3e4e6; }
.vm-tabs { display: flex; gap: 4px; height: 32px; padding: 5px 4px 0; font-family: Roboto, "Noto Sans CJK KR", sans-serif; font-size: 11px; }
.vtab { display: flex; align-items: center; width: 118px; height: 27px; padding: 0 6px 0 5px; border: 1px solid #aaa; border-bottom: 0; border-radius: 4px 4px 0 0; background: #ebecee; }
.vtab span { margin-left: 3px; white-space: nowrap; }
.vtab button { margin-left: auto; color: #c2c2c2; }
.vtab.home { width: 62px; }
.vtab.home span { margin-left: 5px; }
.vtab.active { background: #fff; border-color: #fff; font-weight: 700; font-size: 12px; }

.excel { flex: 1; min-height: 0; display: flex; flex-direction: column; background: linear-gradient(90deg, #dcedea, #e3ebe8 15%, #dcecea 30%, #e6eadf 38%, #e4e9e3 44%, #e2ebee 53%, #e8ecec 76%, #e2eaed); }
.xl-title { display: grid; grid-template-columns: 1fr 368px 1fr; align-items: center; height: 48px; background: #107c41; color: #fff; grid-template-areas: "left search right"; }
.qat { grid-area: left; display: flex; padding-left: 9px; }
.qat button { width: 29px; height: 32px; }
.qat .save { width: 35px; }
.qat .undo { width: 24px; }
.qat .list { width: 10px; }
.qat .redo { width: 24px; margin-left: 6px; }
.qat .first { margin-left: 1px; }
.qat .touch { width: 18px; }
.qat .tlist { width: 20px; }
.qat .more { width: 24px; }
.dim { color: #5da57e; }
.xl-name { grid-area: left; margin-left: 452px; white-space: nowrap; font-size: 13px; }
.xl-search { grid-area: search; display: flex; align-items: center; gap: 14px; height: 32px; margin: 0 -8px 0 8px; padding: 0 13px; border-radius: 3px; background: #cfe3d8; color: #107c41; font-size: 13px; }
.xl-search input { flex: 1; }
.xl-search input::placeholder { color: #107c41; opacity: 1; }
.xl-right { grid-area: right; display: flex; align-items: center; justify-content: flex-end; }
.login { width: 58px; height: 19px; margin-right: 10px; background: #fff; color: #107c41; border-radius: 2px; }
.wb { width: 48px; height: 32px; }

.xl-tabs { display: flex; align-items: center; gap: 20px; height: 30px; padding: 0 12px 0 18px; font-size: 14px; line-height: 14px; color: #222; }
.xl-tabs button { position: relative; height: 24px; padding-bottom: 2px; }
.xl-tabs .file { margin-right: 2px; }
.xl-tabs .en { font-size: 13px; }
.xl-tabs .active { font-weight: 500; }
.xl-tabs .active::after { content: ""; position: absolute; left: 0; right: 0; bottom: 0; height: 2px; background: #107c41; }
.xl-tabs .share { width: 64px; margin-left: auto; gap: 4px; background: #107c41; color: #fff; border-radius: 4px; }

.ribbon { display: flex; height: 101px; margin: 0 9px 0 8px; background: #fff; border-radius: 8px; box-shadow: 0 1px 2px #c4cccc; font-size: 13px; color: #222; }
.g { position: relative; display: flex; flex-direction: column; padding: 5px 0 4px; background: linear-gradient(#cfcfcf, #cfcfcf) right center / 1px 90px no-repeat; }
.g1 { width: 364px; }
.g2 { width: 176px; }
.g3 { width: 226px; }
.g4 { width: 332px; }
.g5 { width: 102px; }
.g6 { width: 273px; }
.g h2 { margin-top: auto; text-align: center; }
.g1 h2 { padding-left: 4px; }
.g6 h2 { padding-right: 18px; }
.items { display: flex; height: 74px; padding: 3px 0 0 7px; }
.g1 .items { padding-left: 14px; }
.g2 .items { padding-left: 4px; }
.g3 .items { padding-left: 6px; }
.big { flex-direction: column; justify-content: flex-start; gap: 1px; line-height: 16px; }
.big span { text-align: center; }
.big span svg { display: inline-block; vertical-align: 0; }
.w40 { width: 40px; } .w42 { width: 42px; } .w44 { width: 44px; } .w58 { width: 58px; } .w60 { width: 60px; } .w64 { width: 64px; } .w84 { width: 84px; }
.isep { width: 1px; height: 41px; margin: 3px 7px 0 9px; background: #cfcfcf; }
.isep.tall { height: 62px; margin: 3px 5px 0 6px; }
.smalls { display: flex; flex-direction: column; gap: 10px; margin-left: 3px; }
.smalls button { justify-content: flex-start; gap: 5px; height: 16px; }
.smalls button:disabled { color: #b5b5b5; }
.smalls.f, .smalls.o { margin-left: 5px; }
.smalls.f button, .smalls.o button { gap: 4px; }
.sorts { display: flex; flex-direction: column; gap: 14px; width: 28px; padding-top: 7px; }
.launcher { position: absolute; right: 3px; bottom: 6px; }
.collapse { align-self: flex-end; margin: 0 11px 4px auto; }

.fbar { display: flex; align-items: center; height: 43px; padding: 0 8px; color: #333; }
.namebox, .fx, .formula { display: flex; align-items: center; height: 28px; background: #fff; border: 1px solid #cfcfcf; border-radius: 4px; }
.namebox { width: 102px; padding: 0 4px 0 6px; font-size: 14px; }
.namebox input { flex: 1; }
.fbar .dots { margin: 0 8px; }
.fx { width: 74px; justify-content: space-around; margin-right: 4px; }
.fn { font: italic 400 19px/20px "Liberation Serif", serif; }
.formula { flex: 1; padding: 0 3px; }
.formula input { flex: 1; }

.docs { display: flex; align-items: flex-end; gap: 2px; height: 26px; padding: 0 1px; background: #fff; border-bottom: 1px solid #999; font-size: 13px; }
.doc { width: 114px; height: 24px; padding: 0 5px; border: 1px solid #aaa; border-bottom: 0; border-radius: 5px 5px 0 0; justify-content: flex-start; gap: 4px; background: #fff; color: #333; }
.doc:first-child span { margin-left: 10px; }
.doc.active { background: #9fd5b7; }
.doc .dx { margin-left: auto; margin-right: 3px; color: #999; }
.doc.new { width: 29px; height: 21px; }
.docbtns { display: flex; gap: 2px; margin: 0 -1px 1px auto; }
.docbtns button { width: 20px; height: 20px; background: #f0f0f0; border: 1px solid #bbb; color: #333; }

.sheet { flex: 1; min-height: 0; display: flex; border-bottom: 1px solid #999; }
.grid { flex: 1; min-width: 0; overflow: hidden; background: #fff; border-right: 1px solid #999; }
.grid table { table-layout: fixed; width: 1906px; border-collapse: separate; border-spacing: 0; font-family: "Noto Sans", sans-serif; line-height: 16px; }
.grid th, .grid td { height: 22px; padding: 2px 0 0; border-right: 1px solid #dedede; border-bottom: 1px solid #dedede; font-weight: 400; }
.grid col { width: 72px; }
.grid col:first-child { width: 34px; }
.grid th { background: #f0f0f0; border-color: #aaa; }
.grid thead th { border-bottom-color: #999; padding: 0 0 4px; }
.grid thead .sel { background: #d0d0d0; color: #217346; border-bottom: 2px solid #217346; padding-bottom: 3px; }
.grid tbody .sel { background: #d0d0d0; color: #217346; border-right: 2px solid #217346; }
.grid thead .corner { padding: 2px 0 0; }
.corner svg { margin-left: auto; }
.grid .cur { position: relative; }
.cur::before { content: ""; position: absolute; inset: -2px; border: 2px solid #217346; }
.cur::after { content: ""; position: absolute; right: -3px; bottom: -3px; width: 5px; height: 5px; background: #217346; border: solid #fff; border-width: 1px 0 0 1px; }
.vscroll { display: flex; flex-direction: column; align-items: center; justify-content: space-between; gap: 4px; width: 17px; margin: 0 2px -3px 2px; padding: 4px 0; border-radius: 8px; background: #f5f5f5; z-index: 1; }
.vscroll i { flex: 1; width: 9px; margin-bottom: 14px; border-radius: 5px; background: #6e6e6e; }

.sheets { display: flex; align-items: center; height: 28px; padding-right: 19px; border-bottom: 1px solid #bbb; background: linear-gradient(90deg, #e3ecda, #ebebda 30%, #f1ece2 50%, #e3efed 66%, #dcebea); }
.strip { display: flex; width: 206px; height: 27px; margin-left: 16px; background: #e5e5e5; }
.strip button { width: 28px; }
.strip .stab { width: 67px; height: 25px; margin: -1px 0 0 28px; background: #fff; border: 1px solid #999; border-top: 0; border-bottom: 2px solid #217346; color: #217346; font-size: 13px; position: relative; }
.strip .add { margin-left: 25px; }
.sheets .dots { margin-left: auto; }
.hscroll { display: flex; align-items: center; gap: 4px; width: calc(38% + 12px); height: 17px; margin-left: 12px; padding: 0 3px 0 4px; border-radius: 8px; background: #f5f5f5; }
.hscroll i { flex: 1; height: 9px; border-radius: 5px; background: #6e6e6e; margin-right: 4px; }

.status { display: flex; align-items: center; height: 22px; padding-left: 11px; background: #f4f4f4; border-bottom: 1px solid #bbb; font-size: 13px; color: #333; }
.status > span { padding-bottom: 3px; }
.acc { display: flex; align-items: center; gap: 3px; margin-left: 20px; }
.views { display: flex; align-items: center; margin-left: auto; height: 21px; }
.views button { width: 40px; height: 21px; }
.views .on { background: #dedede; }
.views .z { width: 20px; }
.views input { width: 100px; height: 11px; appearance: none; background: linear-gradient(#666, #666) center / 100% 1px no-repeat; }
.views input::-webkit-slider-thumb { appearance: none; width: 5px; height: 11px; background: #666; border-radius: 0; }
.pct { width: 45px; text-align: right; padding: 0 8px 2px 0; font-size: 12px; }

.taskbar { display: grid; grid-template-columns: 1fr auto 1fr; align-items: center; height: 47px; background: linear-gradient(90deg, #d5edb0, #d0ebb6 20%, #d9edb0 28%, #d8e6c0 32%, #ebe3b3 38%, #dceca2 43%, #e2efaa 48%, #f0e9b8 52%, #f7e8d2 60%, #e9edee 68%, #cdf3f1 78%, #bff0ed 88%, #c0efeb); }
.weather { justify-self: start; margin: 0 0 4px 19px; gap: 4px; text-align: left; line-height: 15px; }
.weather text { font-family: "Noto Sans", sans-serif; }
.weather em { font-style: normal; color: #566; }
.apps { display: flex; align-items: center; padding-left: 8px; }
.apps > button { width: 44px; height: 40px; }
.apps .start { width: 24px; margin-right: 13px; }
.tsearch { display: flex; align-items: center; gap: 10px; width: 219px; height: 31px; margin-right: 2px; padding: 0 11px; border-radius: 16px; background: #f5f8e8; border: 1px solid #dadfc4; font-size: 13px; }
.tsearch input { flex: 1; }
.tsearch input::placeholder { color: #555; opacity: 1; }
.apps .xlapp { position: relative; width: 145px; height: 38px; margin-left: 3px; gap: 8px; background: #ffffffa0; border: 1px solid #e6e2dc; border-radius: 4px; }
.xlapp::after { content: ""; position: absolute; left: 11px; bottom: 0; width: 16px; height: 3px; border-radius: 2px; background: #888; }
.tray { display: flex; align-items: center; justify-self: end; }
.tray button { width: 32px; height: 32px; }
.tray .vol { width: 20px; }
.clock { width: 76px; padding-bottom: 4px; text-align: right; }
.tray .bell { width: 30px; margin-right: 13px; }

.vm-status { display: flex; align-items: center; height: 21px; padding-left: 1px; background: #e3e4e6; font-size: 13px; white-space: nowrap; }
.vm-status > span { padding-bottom: 2px; }
.vm-icons { display: flex; align-items: center; gap: 6px; margin-left: auto; }
.vm-icons i { width: 1px; height: 16px; margin: 0 3px; background: #aaa; }
.grip { margin-left: 4px; align-self: flex-end; }
```
FILE: grid.js
```js
const table = document.getElementById('cells');
const letters = 'ABCDEFGHIJKLMNOPQRSTUVWXYZ'.split('');
const rowCount = 33;
let html = '<colgroup>' + '<col>'.repeat(27) + '</colgroup><thead><tr><th class="corner"><svg width="17" height="17" viewBox="0 0 17 17"><path d="M14 2v14H0z" fill="#b5b5b5"/></svg></th>';
html += letters.map(l => `<th scope="col"${l === 'B' ? ' class="sel"' : ''}>${l}</th>`).join('') + '</tr></thead><tbody>';
for (let r = 1; r <= rowCount; r++) {
  html += `<tr><th scope="row"${r === 2 ? ' class="sel"' : ''}>${r}</th>`;
  html += letters.map(l => r === 2 && l === 'B' ? '<td class="cur"></td>' : '<td></td>').join('') + '</tr>';
}
table.innerHTML = html + '</tbody>';
```
